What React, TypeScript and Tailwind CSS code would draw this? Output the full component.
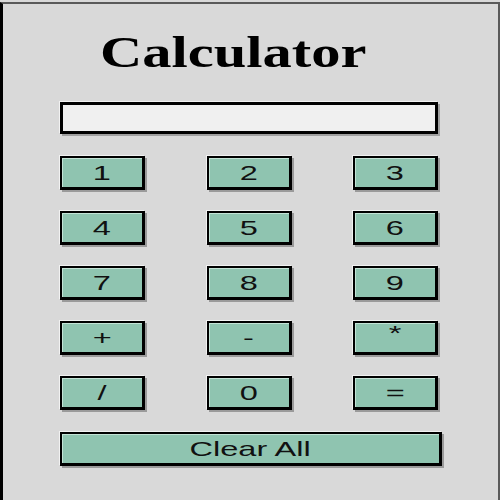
import React from 'react';

const keys = ['1', '2', '3', '4', '5', '6', '7', '8', '9', '+', '-', '*', '/', '0', '='];

const btnClass =
  "h-[34px] bg-[#8fc4b0] border-black border-l-2 border-t-2 border-r-[3px] border-b-[3px] shadow-[inset_1px_1px_0_#c3e3d6,2px_2px_0_#9a9a9a,-1px_-1px_0_#f2f2f2] flex items-center justify-center text-[#111] text-[21px] leading-none font-['Liberation_Sans',Arial,sans-serif]";

export default function App() {
  return (
    <div className="w-[500px] h-[500px] overflow-hidden bg-[#d9d9d9]">
      <div className="mt-[2px] h-[520px] bg-[#d9d9d9] border-l-[3px] border-l-black border-t-2 border-t-[#5a5a5a] border-r-2 border-r-[#5a5a5a] pl-[57px]">
        <div className="mt-[27px] h-[44px] pl-[40px]">
          <span className="inline-block origin-left scale-x-[1.33] text-[44px] leading-none font-bold text-black font-['Liberation_Serif','Times_New_Roman',serif]">
            Calculator
          </span>
        </div>

        <div className="mt-[27px] w-[378px] h-[32px] bg-[#f0f0f0] border-[3px] border-black shadow-[2px_2px_0_#a0a0a0,-1px_-1px_0_#f2f2f2]" />

        <div className="mt-[22px] w-[378px] grid grid-cols-[85px_85px_85px] justify-between gap-y-[21px]">
          {keys.map((k) => (
            <button key={k} className={btnClass}>
              <span className={k === '*' ? 'inline-block scale-x-[1.55] -translate-y-[5px]' : 'inline-block scale-x-[1.55]'}>{k}</span>
            </button>
          ))}
        </div>

        <button className={btnClass + ' mt-[22px] w-[382px] h-[32px]'}>
          <span className="inline-block scale-x-[1.55]">Clear All</span>
        </button>
      </div>
    </div>
  );
}
